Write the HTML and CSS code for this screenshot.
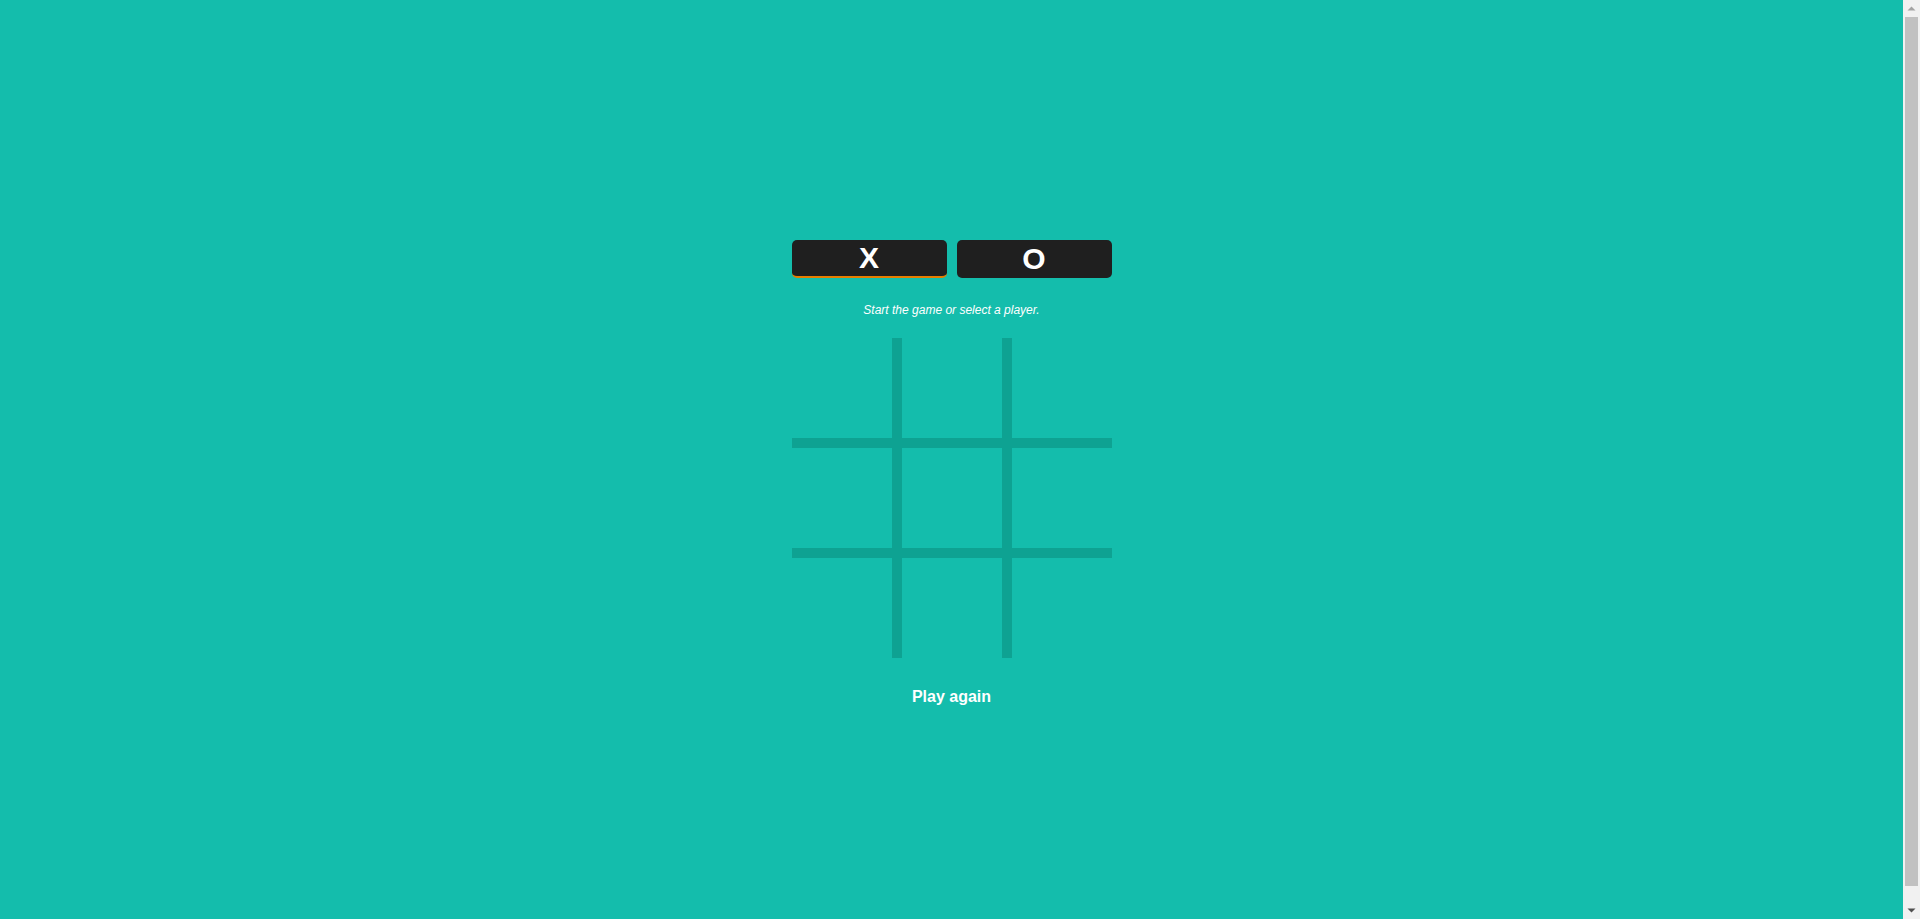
FILE: index.html
```html
<!DOCTYPE html>
<html lang="en">
<head>
<meta charset="utf-8">
<title>Tic Tac Toe</title>
<link rel="stylesheet" href="styles.css">
</head>
<body>
<main class="game">
  <div class="turns">
    <button class="turn active">X</button>
    <button class="turn">O</button>
  </div>
  <p class="status">Start the game or select a player.</p>
  <div class="board">
    <div class="cell"></div><div class="cell"></div><div class="cell"></div>
    <div class="cell"></div><div class="cell"></div><div class="cell"></div>
    <div class="cell"></div><div class="cell"></div><div class="cell"></div>
  </div>
  <button class="restart">Play again</button>
</main>
<div class="scrollbar" aria-hidden="true">
  <svg class="arrow up" width="17" height="17" viewBox="0 0 17 17"><path d="M4.5 10.5 L8.5 6.5 L12.5 10.5 Z" fill="#a3a3a3"/></svg>
  <div class="thumb"></div>
  <svg class="arrow down" width="17" height="17" viewBox="0 0 17 17"><path d="M4.5 6.5 L8.5 10.5 L12.5 6.5 Z" fill="#505050"/></svg>
</div>
</body>
</html>
```
FILE: styles.css
```css
html {
  background: #14bdac;
}
body {
  margin: 8px 25px 8px 8px;
  height: 100vh;
  background: #14bdac;
  font-family: "Liberation Sans", Arial, sans-serif;
  color: #fff;
  display: flex;
  flex-direction: column;
  align-items: center;
}
.game {
  width: 320px;
  margin-top: 232px;
  display: flex;
  flex-direction: column;
  align-items: center;
}
.turns {
  display: flex;
  gap: 10px;
  width: 100%;
}
.turn {
  flex: 1;
  height: 38px;
  box-sizing: border-box;
  background: #1f1f1f;
  color: #fff;
  border: none;
  border-radius: 5px;
  font-family: "Liberation Sans", Arial, sans-serif;
  font-weight: bold;
  font-size: 30px;
  line-height: 36px;
  padding: 0;
  cursor: pointer;
}
.turn.active {
  border-bottom: 2px solid #e67e00;
}
.status {
  margin: 25px 0 21px;
  font-size: 12px;
  font-style: italic;
  line-height: 14px;
}
.board {
  display: grid;
  grid-template-columns: 100px 100px 100px;
  grid-template-rows: 100px 100px 100px;
  gap: 10px;
  background: #0ea292;
  width: 320px;
  height: 320px;
}
.cell {
  background: #14bdac;
}
.restart {
  margin-top: 30px;
  background: none;
  border: none;
  color: #fff;
  font-family: "Liberation Sans", Arial, sans-serif;
  font-weight: bold;
  font-size: 16px;
  line-height: 18px;
  padding: 0;
  cursor: pointer;
}
.scrollbar {
  position: fixed;
  top: 0;
  right: 0;
  width: 17px;
  height: 100vh;
  background: #f1f1f1;
  display: flex;
  flex-direction: column;
  align-items: center;
}
.arrow {
  flex: none;
  display: block;
}
.thumb {
  flex: 1;
  width: 13px;
  margin: 0 0 16px;
  background: #c1c1c1;
}
```
